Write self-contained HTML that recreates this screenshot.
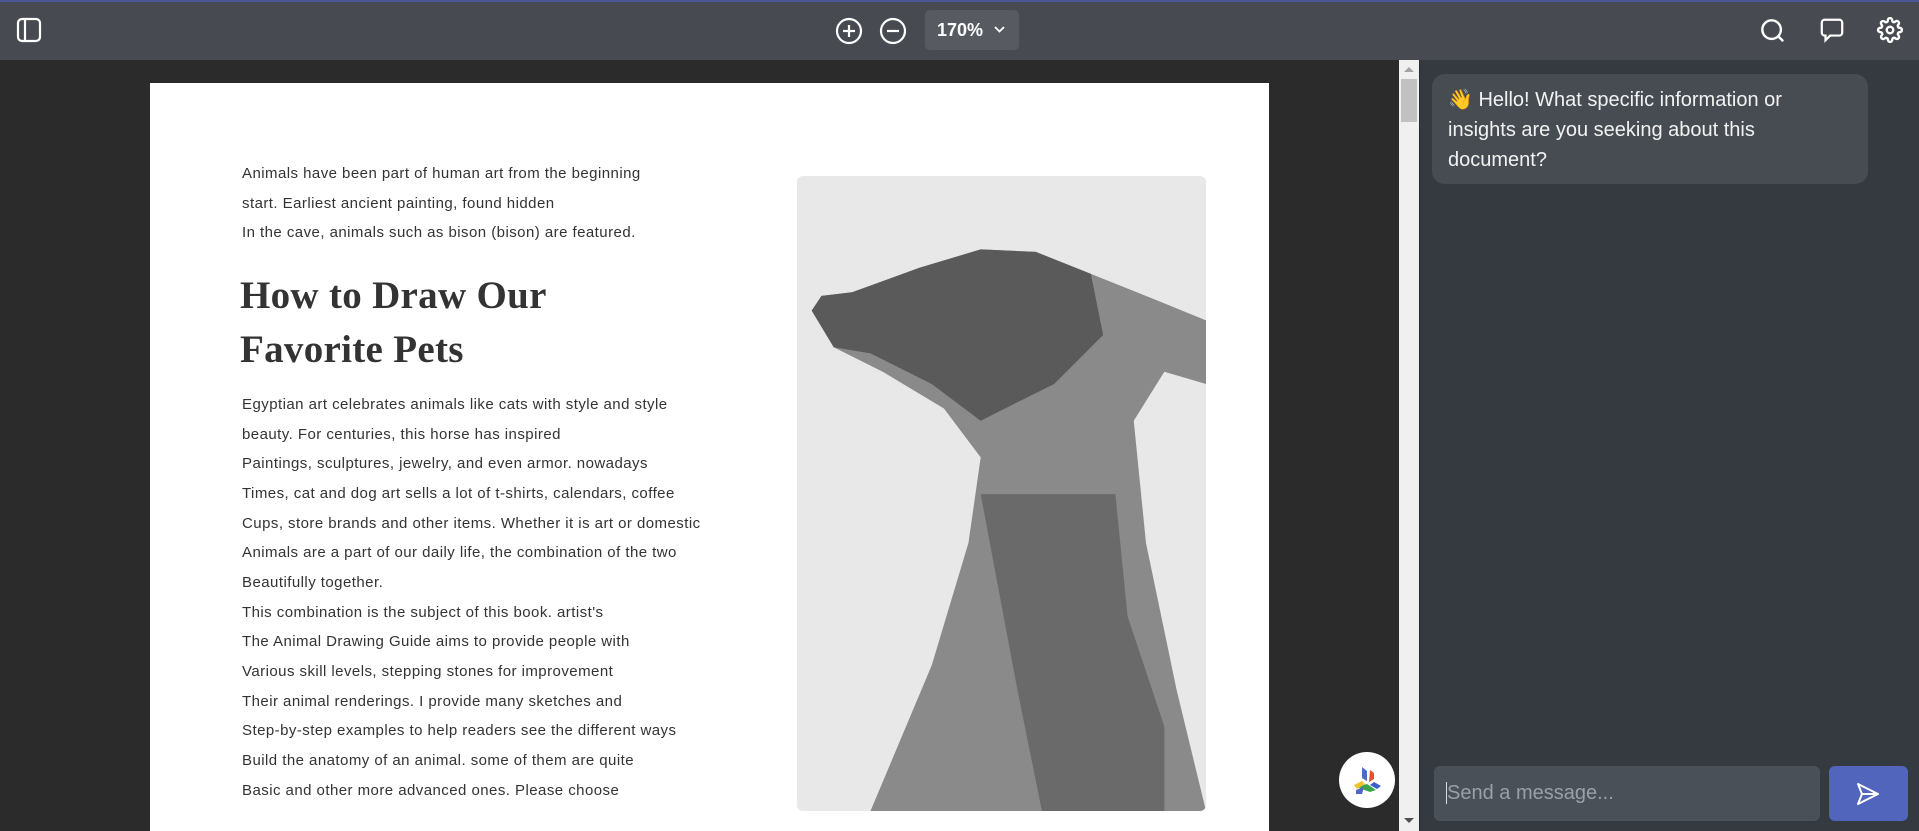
<!DOCTYPE html>
<html><head><meta charset="utf-8"><style>
*{margin:0;padding:0;box-sizing:border-box}
html,body{width:1919px;height:831px;overflow:hidden}
body{background:#2b2b2b;font-family:"Liberation Sans",sans-serif;position:relative}
.tb{position:absolute;left:0;top:0;width:1919px;height:60px;background:#474b51;border-top:2px solid #4c5697}
.ab{position:absolute}
.page{position:absolute;left:150px;top:83px;width:1119px;height:748px;background:#fff}
.t{position:absolute;left:242px;font-size:15px;color:#333;letter-spacing:0.45px;white-space:nowrap}
.h{position:absolute;left:240px;font-family:"Liberation Serif",serif;font-weight:bold;font-size:39px;color:#333;white-space:nowrap;letter-spacing:0.3px}
.chat{position:absolute;left:1420px;top:60px;width:499px;height:771px;background:#353a41}
</style></head><body>
<div class="tb">
<svg class="ab" style="left:16px;top:15px" width="26" height="26" viewBox="0 0 26 26" fill="none" stroke="#fff" stroke-width="2.2"><rect x="2" y="2" width="22" height="22" rx="4"/><line x1="9" y1="2" x2="9" y2="24"/></svg>
<svg class="ab" style="left:835px;top:15px" width="28" height="28" viewBox="0 0 28 28" fill="none" stroke="#fff" stroke-width="2.2"><circle cx="14" cy="14" r="12"/><line x1="8" y1="14" x2="20" y2="14"/><line x1="14" y1="8" x2="14" y2="20"/></svg>
<svg class="ab" style="left:879px;top:15px" width="28" height="28" viewBox="0 0 28 28" fill="none" stroke="#fff" stroke-width="2.2"><circle cx="14" cy="14" r="12"/><line x1="8" y1="14" x2="20" y2="14"/></svg>
<div class="ab" style="left:925px;top:8px;width:94px;height:40px;background:#575b61;border-radius:5px;color:#fff;font-weight:bold;font-size:18px;line-height:40px;padding-left:12px">170%<svg style="position:absolute;left:68px;top:15px" width="13" height="9" viewBox="0 0 13 9" fill="none" stroke="#fff" stroke-width="1.8"><path d="M2 2l4.5 4.5L11 2"/></svg></div>
<svg class="ab" style="left:1760px;top:16px" width="26" height="26" viewBox="0 0 28 28" fill="none" stroke="#fff" stroke-width="2.6"><circle cx="12.5" cy="12.5" r="10"/><line x1="20" y1="20" x2="25" y2="25"/></svg>
<svg class="ab" style="left:1819px;top:15px" width="26" height="26" viewBox="0 0 28 28" fill="none" stroke="#fff" stroke-width="2.4"><path d="M6 3h16a3 3 0 0 1 3 3v11a3 3 0 0 1-3 3H12l-5 5v-5H6a3 3 0 0 1-3-3V6a3 3 0 0 1 3-3z"/></svg>
<svg class="ab" style="left:1877px;top:15px" width="26" height="26" viewBox="0 0 24 24" fill="none" stroke="#fff" stroke-width="2.2"><circle cx="12" cy="12" r="3"/><path d="M19.4 15a1.65 1.65 0 0 0 .33 1.82l.06.06a2 2 0 1 1-2.830 2.83l-.06-.06a1.65 1.65 0 0 0-1.82-.33 1.650 1.65 0 0 0-1 1.51V21a2 2 0 1 1-4 0v-.09A1.65 1.65 0 0 0 9 19.4a1.65 1.65 0 0 0-1.82.33l-.06.06a2 2 0 1 1-2.83-2.83l.06-.06A1.65 1.65 0 0 0 4.68 15a1.65 1.65 0 0 0-1.51-1H3a2 2 0 1 1 0-4h.09A1.65 1.65 0 0 0 4.6 9a1.65 1.65 0 0 0-.33-1.82l-.06-.06a2 2 0 1 1 2.83-2.83l.06.06A1.65 1.65 0 0 0 9 4.68 1.65 1.65 0 0 0 10 3.17V3a2 2 0 1 1 4 0v.09a1.65 1.65 0 0 0 1 1.51 1.65 1.65 0 0 0 1.82-.33l.06-.06a2 2 0 1 1 2.83 2.83l-.06.06A1.65 1.65 0 0 0 19.4 9a1.65 1.65 0 0 0 1.51 1H21a2 2 0 1 1 0 4h-.09a1.65 1.65 0 0 0-1.51 1z"/></svg>
</div>
<div class="page"></div>
<div class="t" style="top:165px">Animals have been part of human art from the beginning</div>
<div class="t" style="top:195px">start. Earliest ancient painting, found hidden</div>
<div class="t" style="top:224px">In the cave, animals such as bison (bison) are featured.</div>
<div class="h" style="top:273px">How to Draw Our</div>
<div class="h" style="top:327px">Favorite Pets</div>
<div class="t" style="top:396px">Egyptian art celebrates animals like cats with style and style</div>
<div class="t" style="top:426px">beauty. For centuries, this horse has inspired</div>
<div class="t" style="top:455px">Paintings, sculptures, jewelry, and even armor. nowadays</div>
<div class="t" style="top:485px">Times, cat and dog art sells a lot of t-shirts, calendars, coffee</div>
<div class="t" style="top:515px">Cups, store brands and other items. Whether it is art or domestic</div>
<div class="t" style="top:544px">Animals are a part of our daily life, the combination of the two</div>
<div class="t" style="top:574px">Beautifully together.</div>
<div class="t" style="top:604px">This combination is the subject of this book. artist's</div>
<div class="t" style="top:633px">The Animal Drawing Guide aims to provide people with</div>
<div class="t" style="top:663px">Various skill levels, stepping stones for improvement</div>
<div class="t" style="top:693px">Their animal renderings. I provide many sketches and</div>
<div class="t" style="top:722px">Step-by-step examples to help readers see the different ways</div>
<div class="t" style="top:752px">Build the anatomy of an animal. some of them are quite</div>
<div class="t" style="top:782px">Basic and other more advanced ones. Please choose</div>
<svg class="ab" style="left:797px;top:176px;border-radius:6px" width="409" height="635" viewBox="0 0 334 519" preserveAspectRatio="none">
<rect width="334" height="519" fill="#e8e8e8"/>
<path d="M12 110 L20 98 L45 95 L100 75 L150 60 L195 62 L240 80 L290 100 L334 118 L334 170 L300 160 L275 200 L285 300 L310 420 L334 519 L60 519 L110 400 L140 300 L150 230 L120 190 L70 160 L30 140 Z" fill="#8a8a8a"/>
<path d="M100 75 L150 60 L195 62 L240 80 L250 130 L210 170 L150 200 L110 170 L60 145 L30 140 L12 110 L20 98 L45 95 Z" fill="#5a5a5a"/>
<path d="M150 260 L260 260 L270 360 L300 450 L300 519 L200 519 L180 420 Z" fill="#6a6a6a"/>
</svg>
<div class="ab" style="left:1399px;top:60px;width:20px;height:771px;background:#f0f0f0"></div>
<div class="ab" style="left:1401px;top:79px;width:16px;height:43px;background:#c1c1c1"></div>
<div class="ab" style="left:1404px;top:67px;width:0;height:0;border-left:5px solid transparent;border-right:5px solid transparent;border-bottom:5px solid #a3a3a3"></div>
<div class="ab" style="left:1404px;top:818px;width:0;height:0;border-left:5px solid transparent;border-right:5px solid transparent;border-top:5px solid #505050"></div>
<div class="ab" style="left:1339px;top:752px;width:56px;height:56px;border-radius:50%;background:#fff"></div>
<svg class="ab" style="left:1350px;top:763px" width="34" height="34" viewBox="0 0 34 34"><path d="M12 4 L17 8 L17 18 L12 15 Z" fill="#4a6cc8"/><path d="M20 7 L24 10 L24 16 L19 19 Z" fill="#e2502c"/><path d="M24 19 L31 23 L27 26 L20 22 Z" fill="#3a5fc4"/><path d="M6 24 L17 21 L26 27 L20 29 Z" fill="#3da34a"/><path d="M4 22 L12 18 L15 21 L7 26 Z" fill="#f2c12e"/><path d="M6 27 L14 24 L12 31 L6 31Z" fill="#4e67c6"/></svg>
<div class="chat"></div>
<div class="ab" style="left:1432px;top:74px;width:436px;height:110px;background:#474c53;border-radius:13px;padding:11px 16px 0 16px;color:#f2f2f2;font-size:20px;line-height:30px">👋 Hello! What specific information or insights are you seeking about this document?</div>
<div class="ab" style="left:1434px;top:766px;width:386px;height:55px;background:#4a5058;border-radius:6px;color:#9aa0a6;font-size:20px;line-height:55px;padding-left:12px"><span style="border-left:1px solid #ddd">Send a message...</span></div>
<div class="ab" style="left:1829px;top:766px;width:79px;height:55px;background:#5165bd;border-radius:6px"><svg style="position:absolute;left:26px;top:15px" width="26" height="26" viewBox="0 0 26 26" fill="none" stroke="#fff" stroke-width="2" stroke-linejoin="round"><path d="M3 3 L23 13 L3 23 L7 13 Z"/><line x1="7" y1="13" x2="23" y2="13"/></svg></div>
</body></html>
